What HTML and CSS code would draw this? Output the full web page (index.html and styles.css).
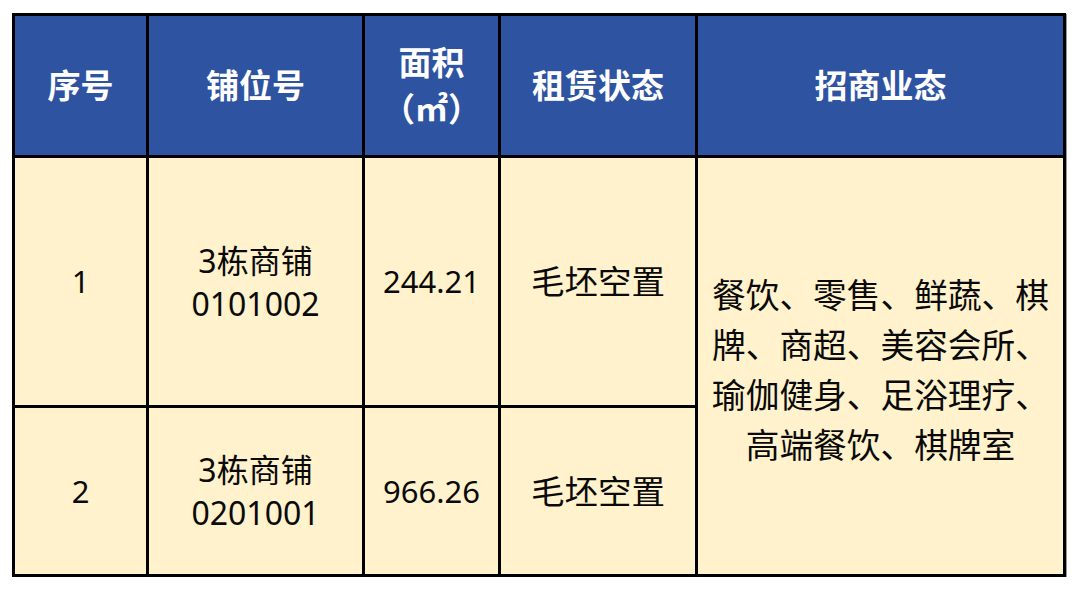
FILE: index.html
```html
<!DOCTYPE html>
<html lang="zh-CN">
<head>
<meta charset="utf-8">
<title>商铺招商</title>
<link rel="stylesheet" href="styles.css">
</head>
<body>
<div class="table">
  <div class="cell head">序号</div>
  <div class="cell head">铺位号</div>
  <div class="cell head two">面积<br>（㎡）</div>
  <div class="cell head">租赁状态</div>
  <div class="cell head">招商业态</div>

  <div class="cell body num">1</div>
  <div class="cell body two">3栋商铺<br>0101002</div>
  <div class="cell body num">244.21</div>
  <div class="cell body status">毛坯空置</div>
  <div class="cell body biz">餐饮、零售、鲜蔬、棋<br>牌、商超、美容会所、<br>瑜伽健身、足浴理疗、<br>高端餐饮、棋牌室</div>

  <div class="cell body num">2</div>
  <div class="cell body two">3栋商铺<br>0201001</div>
  <div class="cell body num">966.26</div>
  <div class="cell body status">毛坯空置</div>
</div>
</body>
</html>
```
FILE: styles.css
```css
html, body {
  margin: 0;
  background: #ffffff;
}
body {
  padding: 13px 0 0 12px;
  font-family: "Noto Sans", "Noto Sans CJK SC", sans-serif;
}
.table {
  display: grid;
  grid-template-columns: 131px 213px 133px 194px 365px;
  grid-template-rows: 139px 247px 166px;
  gap: 3px;
  padding: 3px;
  width: max-content;
  background: #000000;
  box-shadow: 1px 1px 0 #9a9a9a;
}
.cell {
  display: flex;
  align-items: center;
  justify-content: center;
  text-align: center;
}
.head {
  background: #2e54a1;
  color: #ffffff;
  font-weight: 700;
  font-size: 33px;
  line-height: 46px;
}
.body {
  background: #fff2cc;
  color: #0a0a0a;
  font-size: 32px;
  line-height: 43px;
}
.num {
  font-size: 31px;
}
.status {
  font-size: 33.5px;
}
.biz {
  grid-column: 5;
  grid-row: 2 / span 2;
  font-size: 33.7px;
  line-height: 50px;
  padding-top: 8px;
}
```
